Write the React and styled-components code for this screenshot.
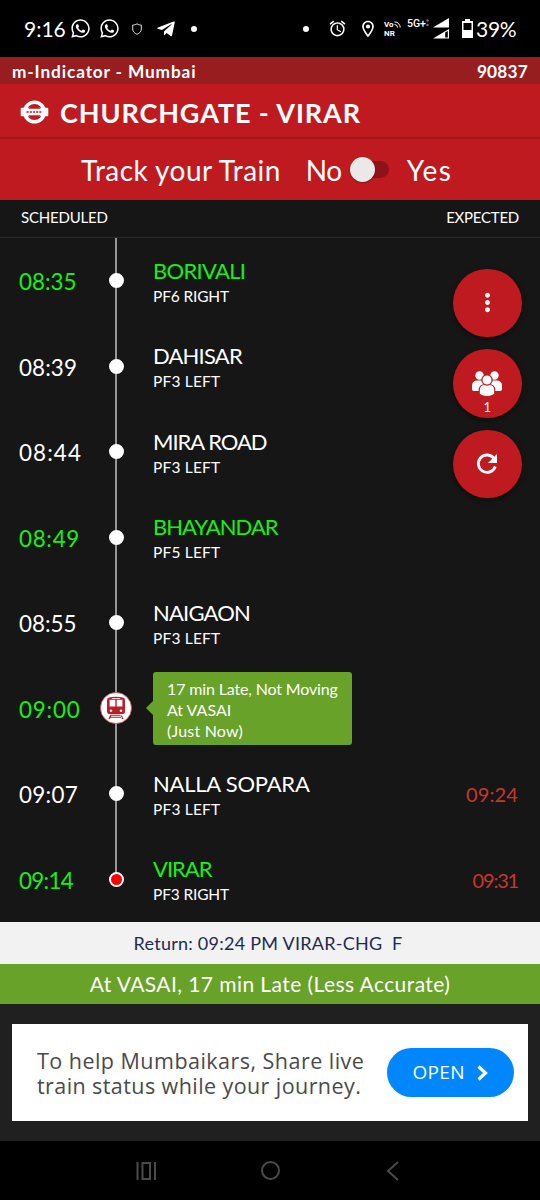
// src/components/TrainTracker.jsx
import React from 'react';
import styled, { createGlobalStyle } from 'styled-components';
import { FaWhatsapp, FaTelegramPlane } from 'react-icons/fa';
import { MdAlarm, MdMoreVert, MdOutlineLocationOn } from 'react-icons/md';

const COLORS = {
  red: '#c01a21',
  darkRed: '#971d1f',
  bg: '#161616',
  green: '#69a228',
  lime: '#16f016',
  late: '#c9362a',
};

// ls / timeLs: letter-spacing of the name and the time
const STOPS = [
  { time: '08:35', name: 'BORIVALI', pf: 'PF6 RIGHT', fast: true, ls: -0.7, timeLs: 0 },
  { time: '08:39', name: 'DAHISAR', pf: 'PF3 LEFT', ls: -0.8, timeLs: 0.1 },
  { time: '08:44', name: 'MIRA ROAD', pf: 'PF3 LEFT', ls: -1, timeLs: 1.1 },
  { time: '08:49', name: 'BHAYANDAR', pf: 'PF5 LEFT', fast: true, ls: -0.95, timeLs: 0.7 },
  { time: '08:55', name: 'NAIGAON', pf: 'PF3 LEFT', ls: -0.8, timeLs: 0 },
  { time: '09:00', train: true, fast: true, timeLs: 0.8 },
  { time: '09:07', name: 'NALLA SOPARA', pf: 'PF3 LEFT', expected: '09:24', ls: -0.23, timeLs: 0.3 },
  { time: '09:14', name: 'VIRAR', pf: 'PF3 RIGHT', fast: true, expected: '09:31', last: true, ls: -1, timeLs: -0.7 },
];

const GlobalStyle = createGlobalStyle`
  * { box-sizing: border-box; }
  body {
    margin: 0;
    background: #000;
    color: #fff;
    font-family: Lato, 'Liberation Sans', sans-serif;
  }
  svg { display: block; flex: none; }
`;

const Screen = styled.div`
  width: 540px;
  height: 1200px;
  display: flex;
  flex-direction: column;
  overflow: hidden;
`;

const Text = styled.span`
  font-size: ${({ $size }) => $size}px;
  font-weight: ${({ $weight }) => $weight || 400};
  letter-spacing: ${({ $ls }) => $ls || 0}px;
  line-height: 1;
  white-space: pre;
`;

// --- status bar ---
const StatusBar = styled.div`
  height: 57px;
  flex: none;
  display: flex;
  align-items: center;
  padding: 0 24px;
  background: #000;
`;

const Slot = styled.div`
  flex: none;
  width: ${({ $w }) => $w}px;
  margin-left: ${({ $ml }) => $ml || 0}px;
  display: flex;
  justify-content: ${({ $start }) => ($start ? 'flex-start' : 'center')};
`;

const Dot = styled.i`
  width: 6px;
  height: 6px;
  border-radius: 50%;
  background: #fff;
`;

const VoNr = styled.div`
  font: 700 8px/9px Roboto, sans-serif;
  display: flex;
  flex-direction: column;
  width: 18px;
`;

const VoLine = styled.div`
  display: flex;
  align-items: center;
`;

const Network = styled.div`
  font: 500 10.5px/10px Roboto, sans-serif;
  padding-bottom: 10px;
`;

// --- red header ---
const Strip = styled.div`
  height: 27px;
  flex: none;
  display: flex;
  align-items: center;
  justify-content: space-between;
  padding: 2px 12px 0;
  background: ${COLORS.darkRed};
`;

const TitleBar = styled.div`
  height: 55px;
  flex: none;
  display: flex;
  align-items: center;
  gap: 11px;
  padding: 3px 20px 0;
  background: ${COLORS.red};
  border-bottom: 2px solid #a5161c;
`;

const TrackBar = styled.div`
  height: 61px;
  flex: none;
  display: flex;
  align-items: center;
  padding-left: 81px;
  background: ${COLORS.red};
`;

const Toggle = styled.div`
  width: 39px;
  height: 25px;
  margin: 0 18px 0 8px;
  display: flex;
  align-items: center;
  position: relative;

  &::before {
    content: '';
    position: absolute;
    right: 0;
    top: 4px;
    width: 30px;
    height: 17px;
    border-radius: 9px;
    background: #8c1319;
  }
`;

const Knob = styled.i`
  position: relative;
  width: 25px;
  height: 25px;
  border-radius: 50%;
  background: #ebe8e8;
  box-shadow: 0 1px 2px rgba(0, 0, 0, 0.3);
`;

const ColumnHeads = styled.div`
  height: 38px;
  flex: none;
  display: flex;
  justify-content: space-between;
  align-items: center;
  padding: 0 21px 3px 21px;
  background: ${COLORS.bg};
  border-bottom: 1px solid #2a2a2a;
`;

// --- timeline ---
const Timeline = styled.div`
  position: relative;
  height: 684px;
  flex: none;
  background: ${COLORS.bg};
`;

const StopRow = styled.div`
  height: 85.5px;
  display: grid;
  grid-template-columns: 78px 38px 1fr auto;
  padding: 0 22px 0 19px;
  align-items: center;
`;

const Time = styled(Text)`
  padding-top: ${({ $pt = 3 }) => $pt}px;
  color: ${({ $color }) => $color};
`;

const Rail = styled.div`
  align-self: stretch;
  display: flex;
  align-items: center;
  justify-content: center;
  background: linear-gradient(#969696, #969696) center top / 2px ${({ $last }) => ($last ? '50%' : '100%')} no-repeat;
`;

const Marker = styled.i`
  width: 15px;
  height: 15px;
  border-radius: 50%;
  background: ${({ $end }) => ($end ? '#f00' : '#fff')};
  border: 2.5px solid #fff;
`;

const Station = styled.div`
  padding-left: 18px;
  display: flex;
  flex-direction: column;
  gap: 7px;
  padding-top: 2px;
`;

const StationName = styled(Text)`
  color: ${({ $fast }) => ($fast ? COLORS.lime : '#fff')};
`;

const Bubble = styled.div`
  position: relative;
  width: 199px;
  height: 73px;
  margin-left: 18px;
  padding: 6px 0 0 14px;
  border-radius: 3px;
  background: ${COLORS.green};
  display: flex;
  flex-direction: column;

  span { line-height: 21px; }

  &::before {
    content: '';
    position: absolute;
    left: -7px;
    top: 29px;
    border: solid transparent;
    border-width: 7px 7px 7px 0;
    border-right-color: ${COLORS.green};
  }
`;

const FabStack = styled.div`
  position: absolute;
  top: 30.5px;
  right: 18.5px;
  display: flex;
  flex-direction: column;
  gap: 12px;
`;

const Fab = styled.button`
  width: 68.6px;
  height: 68.6px;
  padding: ${({ $pt }) => $pt || 0}px 0 0;
  border: 0;
  border-radius: 50%;
  display: flex;
  flex-direction: column;
  align-items: center;
  justify-content: center;
  gap: 4px;
  color: #fff;
  font-family: inherit;
  background: ${COLORS.red};
  box-shadow: 0 2px 5px rgba(0, 0, 0, 0.5);
`;

// --- bottom ---
const ReturnBar = styled.div`
  height: 41.5px;
  flex: none;
  display: flex;
  align-items: center;
  justify-content: center;
  padding: 1px 4px 0 0;
  color: #232a52;
  background: #f2f2f2;
`;

const LiveBar = styled.div`
  height: 40.5px;
  flex: none;
  display: flex;
  align-items: center;
  justify-content: center;
  background: ${COLORS.green};
`;

const AdArea = styled.div`
  height: 137px;
  flex: none;
  padding: 20px 12.5px 20px 12px;
  background: #202020;
`;

const Ad = styled.div`
  height: 97px;
  display: flex;
  align-items: center;
  justify-content: space-between;
  padding: 0 14px 0 25px;
  background: #fff;
  font-family: 'Open Sans', sans-serif;
`;

const AdCopy = styled.div`
  display: flex;
  flex-direction: column;
  color: #4a4a4a;

  span { line-height: 25px; }
`;

const OpenButton = styled.button`
  width: 127px;
  height: 49px;
  padding: 0 0 0 26px;
  border: 0;
  border-radius: 25px;
  display: flex;
  align-items: center;
  gap: 12px;
  color: #fff;
  font-family: inherit;
  background: #0087fd;
`;

const NavBar = styled.div`
  flex: 1;
  display: flex;
  align-items: center;
  justify-content: space-between;
  padding: 0 141px 0 136px;
  background: #000;
`;

// --- drawings ---
const ShieldIcon = () => (
  <svg width="10" height="12" viewBox="0 0 10 12" fill="none" stroke="#ddd" strokeWidth="1">
    <path d="M5 .8C6.500 1.800 8 2 9.300 2v4c0 2.500-1.700 4.300-4.300 5.300C2.400 10.300.700 8.500.700 6V2C2 2 3.500 1.800 5 .8z" />
  </svg>
);

const SignalIcon = () => (
  <svg width="17" height="21" viewBox="0 0 17 21">
    <path d="M0 9.500 16 0v9.500z" fill="#fff" />
    <path d="M0 20.500 16 11v9.500z" fill="#fff" />
    <path d="M12.200 14.400 14.800 12.900v6.600h-2.600z" fill="#000" />
  </svg>
);

const DataDots = () => (
  <svg width="3" height="8" viewBox="0 0 3 8" fill="#777">
    <circle cx="1.500" cy="1.500" r="1.200" />
    <circle cx="1.500" cy="6" r="1.200" />
  </svg>
);

const BatteryIcon = () => (
  <svg width="11" height="19" viewBox="0 0 11 19">
    <path d="M3 0h5v2h3v17H0V2h3z" fill="#fff" />
    <path d="M1.500 4h8v7h-8z" fill="#000" />
  </svg>
);

const VoWave = () => (
  <svg width="7" height="7" viewBox="0 0 7 7" fill="none" stroke="#fff" strokeWidth="1">
    <path d="M.5 1A5.500 5.500 0 0 1 6.200 6.500M.5 3.500A3 3 0 0 1 3.500 6.500" />
  </svg>
);

const Roundel = () => (
  <svg width="29" height="24" viewBox="0 0 29 24">
    <circle cx="14.500" cy="12" r="9.800" fill="none" stroke="#fff" strokeWidth="3.600" />
    <rect x=".7" y="7.800" width="27.600" height="8.400" rx="1" fill="#fff" />
    <path d="M8.300 8.800Q14.500 2.500 20.700 8.800zM8.300 15.200Q14.500 21.500 20.700 15.200z" fill={COLORS.red} />
    <path d="M6.500 12h16" stroke={COLORS.red} strokeWidth="1.400" strokeDasharray="2.200 1" />
  </svg>
);

const TrainBadge = () => (
  <svg width="32" height="32" viewBox="0 0 32 32">
    <circle cx="16" cy="16" r="15.500" fill="#fff" stroke="#d9474c" strokeWidth=".8" />
    <g fill="#bd1d26">
      <path d="M9 5.500Q16 4 23 5.500q2 .5 2 3V19q0 3-2 3H9Q7 22 7 19V8.500q0-2.500 2-3z" />
      <path d="M10.500 22.800h11v1h-11zM9.800 24.800h12.400v1H9.800zM10.300 22.800h1.400L10 27H8.400zM21.700 22.800h-1.400L22 27h1.600z" />
    </g>
    <path d="M9.600 7.800h5.700v6.700H9.600zM16.700 7.800h5.700v6.700h-5.700zM12 6h8v.8h-8z" fill="#fff" />
    <circle cx="11" cy="18.700" r="1.300" fill="#fff" />
    <circle cx="21" cy="18.700" r="1.300" fill="#fff" />
  </svg>
);

const CrowdIcon = () => (
  <svg width="30" height="26" viewBox="0 0 30 26" fill="#fff">
    <circle cx="7.500" cy="4.500" r="4.200" />
    <circle cx="22.500" cy="4.500" r="4.200" />
    <path d="M0 18.500V15q0-5.500 5.500-5.500h4Q15 9.500 15 15v5H4q-4 0-4-1.500z" />
    <path d="M30 18.500V15q0-5.500-5.500-5.500h-4Q15 9.500 15 15v5h11q4 0 4-1.500z" />
    <g stroke={COLORS.red} strokeWidth="1.200">
      <path d="M7.200 23v-3.500q0-6 6-6h3.600q6 0 6 6V23q-2.500 2.500-7.800 2.500T7.200 23z" />
      <circle cx="15" cy="9" r="5.100" />
    </g>
  </svg>
);

const RefreshIcon = () => (
  <svg width="22" height="22" viewBox="0 0 22 22">
    <path d="M18.200 5.700A8.700 8.700 0 1 0 19.300 13.500" fill="none" stroke="#fff" strokeWidth="2.800" />
    <path d="M21 1v9h-9z" fill="#fff" />
  </svg>
);

function Stop({ stop }) {
  return (
    <StopRow>
      <Time $size={22.4} $ls={stop.timeLs} $color={stop.fast ? COLORS.lime : '#fff'}>{stop.time}</Time>
      <Rail $last={stop.last}>{stop.train ? <TrainBadge /> : <Marker $end={stop.last} />}</Rail>
      {stop.train ? (
        <Bubble>
          <Text $size={16} $ls={-0.15}>17 min Late, Not Moving</Text>
          <Text $size={16}>At VASAI</Text>
          <Text $size={16} $ls={0.2}>(Just Now)</Text>
        </Bubble>
      ) : (
        <Station>
          <StationName $size={22} $ls={stop.ls} $fast={stop.fast}>{stop.name}</StationName>
          <Text $size={15.5} $ls={stop.pf.endsWith('LEFT') ? 0.18 : -0.15}>{stop.pf}</Text>
        </Station>
      )}
      {stop.expected && (
        <Time $size={20} $pt={1} $ls={stop.last ? -1.2 : 0.1} $color={COLORS.late}>{stop.expected}</Time>
      )}
    </StopRow>
  );
}

// --- main component ---
export default function TrainTracker() {
  return (
    <Screen>
      <GlobalStyle />
      <StatusBar>
        <Slot $w={42} $start><Text $size={21}>9:16</Text></Slot>
        <Slot $w={20} $ml={4}><FaWhatsapp size={21} /></Slot>
        <Slot $w={20} $ml={9}><FaWhatsapp size={21} /></Slot>
        <Slot $w={10} $ml={13}><ShieldIcon /></Slot>
        <Slot $w={20} $ml={14}><FaTelegramPlane size={20} /></Slot>
        <Slot $w={6} $ml={15}><Dot /></Slot>
        <Slot $w={6} $ml={106}><Dot /></Slot>
        <Slot $w={18} $ml={19}><MdAlarm size={19} /></Slot>
        <Slot $w={18} $ml={13}><MdOutlineLocationOn size={20} /></Slot>
        <Slot $w={18} $ml={7}>
          <VoNr>
            <VoLine>Vo<VoWave /></VoLine>
            NR
          </VoNr>
        </Slot>
        <Slot $w={22} $ml={5} $start>
          <Network>5G+</Network>
          <DataDots />
        </Slot>
        <Slot $w={17} $ml={4}><SignalIcon /></Slot>
        <Slot $w={11} $ml={12}><BatteryIcon /></Slot>
        <Slot $w={42} $ml={3} $start><Text $size={21} $ls={-0.3}>39%</Text></Slot>
      </StatusBar>
      <Strip>
        <Text $size={17.3} $weight={700} $ls={0.85}>m-Indicator - Mumbai</Text>
        <Text $size={17.3} $weight={700} $ls={0.2}>90837</Text>
      </Strip>
      <TitleBar>
        <Roundel />
        <Text $size={27} $weight={700} $ls={0.9}>CHURCHGATE - VIRAR</Text>
      </TitleBar>
      <TrackBar>
        <Text $size={28} $ls={0.45}>Track your Train</Text>
        <Slot $w={25} />
        <Text $size={28} $ls={-0.4}>No</Text>
        <Toggle><Knob /></Toggle>
        <Text $size={28} $ls={1.4}>Yes</Text>
      </TrackBar>
      <ColumnHeads>
        <Text $size={15} $ls={-0.2}>SCHEDULED</Text>
        <Text $size={15} $ls={-0.25}>EXPECTED</Text>
      </ColumnHeads>
      <Timeline>
        {STOPS.map((stop) => <Stop key={stop.time} stop={stop} />)}
        <FabStack>
          <Fab><MdMoreVert size={29} /></Fab>
          <Fab $pt={18}>
            <CrowdIcon />
            <Text $size={13}>1</Text>
          </Fab>
          <Fab><RefreshIcon /></Fab>
        </FabStack>
      </Timeline>
      <ReturnBar><Text $size={18} $ls={0.25}>{'Return: 09:24 PM VIRAR-CHG  F'}</Text></ReturnBar>
      <LiveBar><Text $size={21} $ls={0.42}>At VASAI, 17 min Late (Less Accurate)</Text></LiveBar>
      <AdArea>
        <Ad>
          <AdCopy>
            <Text $size={21.5} $ls={0.47}>To help Mumbaikars, Share live</Text>
            <Text $size={21.5} $ls={0.42}>train status while your journey.</Text>
          </AdCopy>
          <OpenButton>
            <Text $size={19} $ls={0.3}>OPEN</Text>
            <svg width="11" height="16" viewBox="0 0 11 16" fill="none" stroke="#fff" strokeWidth="3.200">
              <path d="M1.500 1.500 8.500 8l-7 6.500" />
            </svg>
          </OpenButton>
        </Ad>
      </AdArea>
      <NavBar>
        <svg width="21" height="18" viewBox="0 0 21 18" fill="none" stroke="#4a4a4a" strokeWidth="2">
          <path d="M1.500 0v18M19 0v18M6.500 1h7.500v16H6.500z" />
        </svg>
        <svg width="22" height="21" viewBox="0 0 22 21" fill="none" stroke="#4a4a4a" strokeWidth="2">
          <circle cx="9.500" cy="10.500" r="8.500" />
        </svg>
        <svg width="13" height="20" viewBox="0 0 13 20" fill="none" stroke="#4a4a4a" strokeWidth="2">
          <path d="M12 1 2 10l10 9" />
        </svg>
      </NavBar>
    </Screen>
  );
}
